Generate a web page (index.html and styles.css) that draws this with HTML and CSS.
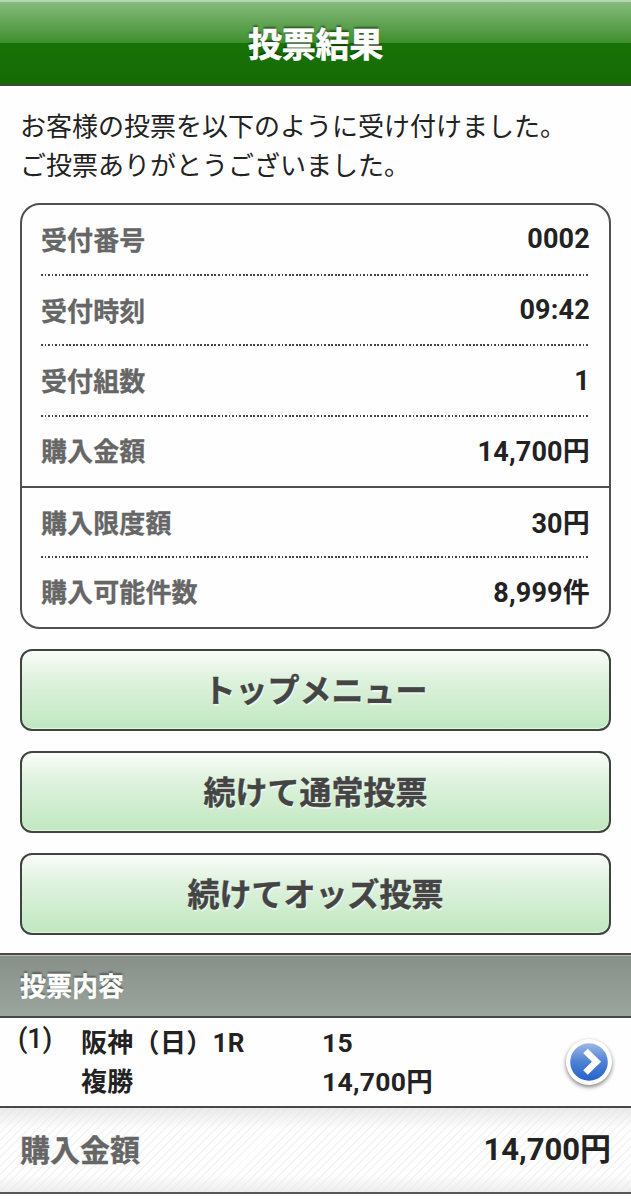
FILE: index.html
```html
<!DOCTYPE html>
<html lang="ja">
  <head>
    <meta charset="UTF-8" />
    <meta name="viewport" content="width=device-width, initial-scale=1.0" />
    <title>投票結果</title>
    <link rel="stylesheet" href="styles.css">
  </head>
  <body>
    <h1 class="header">投票結果</h1>
    <div class="main">
      <p class="message">お客様の投票を以下のように受け付けました。<br />ご投票ありがとうございました。</p>
      <dl class="result">
        <div class="row"><dt>受付番号</dt><dd>0002</dd></div>
        <div class="row"><dt>受付時刻</dt><dd>09:42</dd></div>
        <div class="row"><dt>受付組数</dt><dd>1</dd></div>
        <div class="row last"><dt>購入金額</dt><dd>14,700円</dd></div>
        <div class="row"><dt>購入限度額</dt><dd>30円</dd></div>
        <div class="row"><dt>購入可能件数</dt><dd>8,999件</dd></div>
      </dl>
      <div class="btnArea">
        <button class="btn">トップメニュー</button>
        <button class="btn">続けて通常投票</button>
        <button class="btn">続けてオッズ投票</button>
      </div>
    </div>
    <h2 class="subtitle">投票内容</h2>
    <div class="bet">
      <div class="no">(1)</div>
      <div class="race">阪神（日）1R<br />複勝</div>
      <div class="buy">15<br />14,700円</div>
      <svg class="arrow" viewBox="0 0 46 46" width="46" height="46">
        <defs>
          <linearGradient id="blue" x1="0" y1="0" x2="0" y2="1">
            <stop offset="0" stop-color="#9db9e8" />
            <stop offset="0.5" stop-color="#4d80d3" />
            <stop offset="1" stop-color="#2563cf" />
          </linearGradient>
        </defs>
        <circle cx="23" cy="23" r="22.5" fill="#fff" />
        <circle cx="23" cy="23" r="18.8" fill="url(#blue)" />
        <path d="M19.5 12L30.5 22.7L19.5 33.5" fill="none" stroke="#fff" stroke-width="6.5" />
      </svg>
    </div>
    <div class="total">
      <span class="totalName">購入金額</span>
      <span class="totalPrice">14,700円</span>
    </div>
  </body>
</html>
```
FILE: styles.css
```css
* {
  box-sizing: border-box;
}
body {
  margin: 0;
  background: #fefefe;
  color: #222;
  font-family: Roboto, "Noto Sans CJK JP", sans-serif;
  font-size: 26px;
}
.header {
  display: flex;
  align-items: center;
  justify-content: center;
  height: 86px;
  margin: 0;
  padding-bottom: 2px;
  border-top: 2px solid #b5d6b0;
  border-bottom: 2px solid #3d4f3b;
  background: linear-gradient(#86bb7d 0, #3f8f2d 41px, #177305 41px, #176a07 100%);
  color: #fff;
  font-size: 34px;
  letter-spacing: -0.3px;
  -webkit-text-stroke: 0.6px #fff;
  text-shadow: 0 -2px 2px rgba(0, 0, 0, 0.5);
}
.main {
  padding: 22px 20px 18px;
}
.message {
  margin: 0 0 18px;
  line-height: 38.5px;
  white-space: nowrap;
}
.result {
  height: 426px;
  margin: 0;
  border: 2px solid #505050;
  border-radius: 20px;
  overflow: hidden;
}
.row {
  display: flex;
  align-items: center;
  justify-content: space-between;
  height: 70.7px;
  padding: 0 19px 2px;
  /* 点線 */
  background: repeating-linear-gradient(90deg, #444 0 1.77px, transparent 1.77px 3.54px) 19px 100% / calc(100% - 38px) 2px no-repeat;
  font-weight: bold;
}
.row.last {
  border-bottom: 2px solid #505050;
  background: none;
}
.row:last-child {
  height: 69px;
  background: none;
}
dt {
  margin-top: -2px;
  color: #666;
  letter-spacing: 0.1px;
  -webkit-text-stroke: 0.3px #666;
}
dd {
  margin: 0;
  font-size: 27px;
  letter-spacing: 0.2px;
}
.row:nth-child(n + 4) dd {
  margin-top: -2px;
}
.btnArea {
  display: grid;
  gap: 20px;
  margin-top: 20px;
}
.btn {
  height: 82px;
  padding: 0 0 5px;
  border: 2px solid #3e443e;
  border-radius: 12px;
  background: linear-gradient(#fafdf9, #dff2df 35%, #c0e8c0);
  box-shadow: inset 0 -1px 1px #e4f5e2;
  color: #444;
  font: bold 32px Roboto, "Noto Sans CJK JP", sans-serif;
  -webkit-text-stroke: 0.4px #444;
  text-shadow: 1px 2px 1px rgba(255, 255, 255, 0.6);
}
.subtitle {
  display: flex;
  align-items: center;
  height: 65px;
  margin: 0;
  padding: 0 20px 3px;
  border-top: 2px solid #484848;
  border-bottom: 2px solid #484848;
  background: linear-gradient(#888f89, #9aa59e);
  box-shadow: inset 0 1px 0 #b4bab5;
  color: #fff;
  font-size: 26px;
  -webkit-text-stroke: 0.3px #fff;
  text-shadow: 0 -2px 2px rgba(0, 0, 0, 0.4);
}
.bet {
  display: grid;
  grid-template-columns: 63px 241px 1fr 46px;
  height: 90px;
  padding: 5px 19px 0 18px;
  border-bottom: 2px solid #484848;
  font-weight: bold;
  line-height: 39px;
}
.no {
  font-size: 27px;
  font-weight: 500;
  line-height: 32px;
}
.race {
  padding-top: 1px;
  letter-spacing: 0.3px;
}
.buy {
  font-size: 26.5px;
  letter-spacing: 0.3px;
}
.arrow {
  margin-top: 16px;
  border-radius: 50%;
  box-shadow: 0 2px 4px rgba(0, 0, 0, 0.5);
}
.total {
  display: flex;
  align-items: center;
  justify-content: space-between;
  height: 86px;
  padding: 0 20px 5px;
  border-bottom: 2px solid #555;
  background:
    linear-gradient(rgba(225, 225, 225, 0.7), transparent 25%, transparent 80%, rgba(230, 230, 230, 0.7)),
    repeating-linear-gradient(135deg, #fefefe 0 4.6px, #f4f4f4 4.6px 6px);
  font-size: 30px;
  font-weight: bold;
}
.totalName {
  color: #666;
  -webkit-text-stroke: 0.3px #666;
}
.totalPrice {
  margin-top: -2px;
  font-size: 31px;
}
```
